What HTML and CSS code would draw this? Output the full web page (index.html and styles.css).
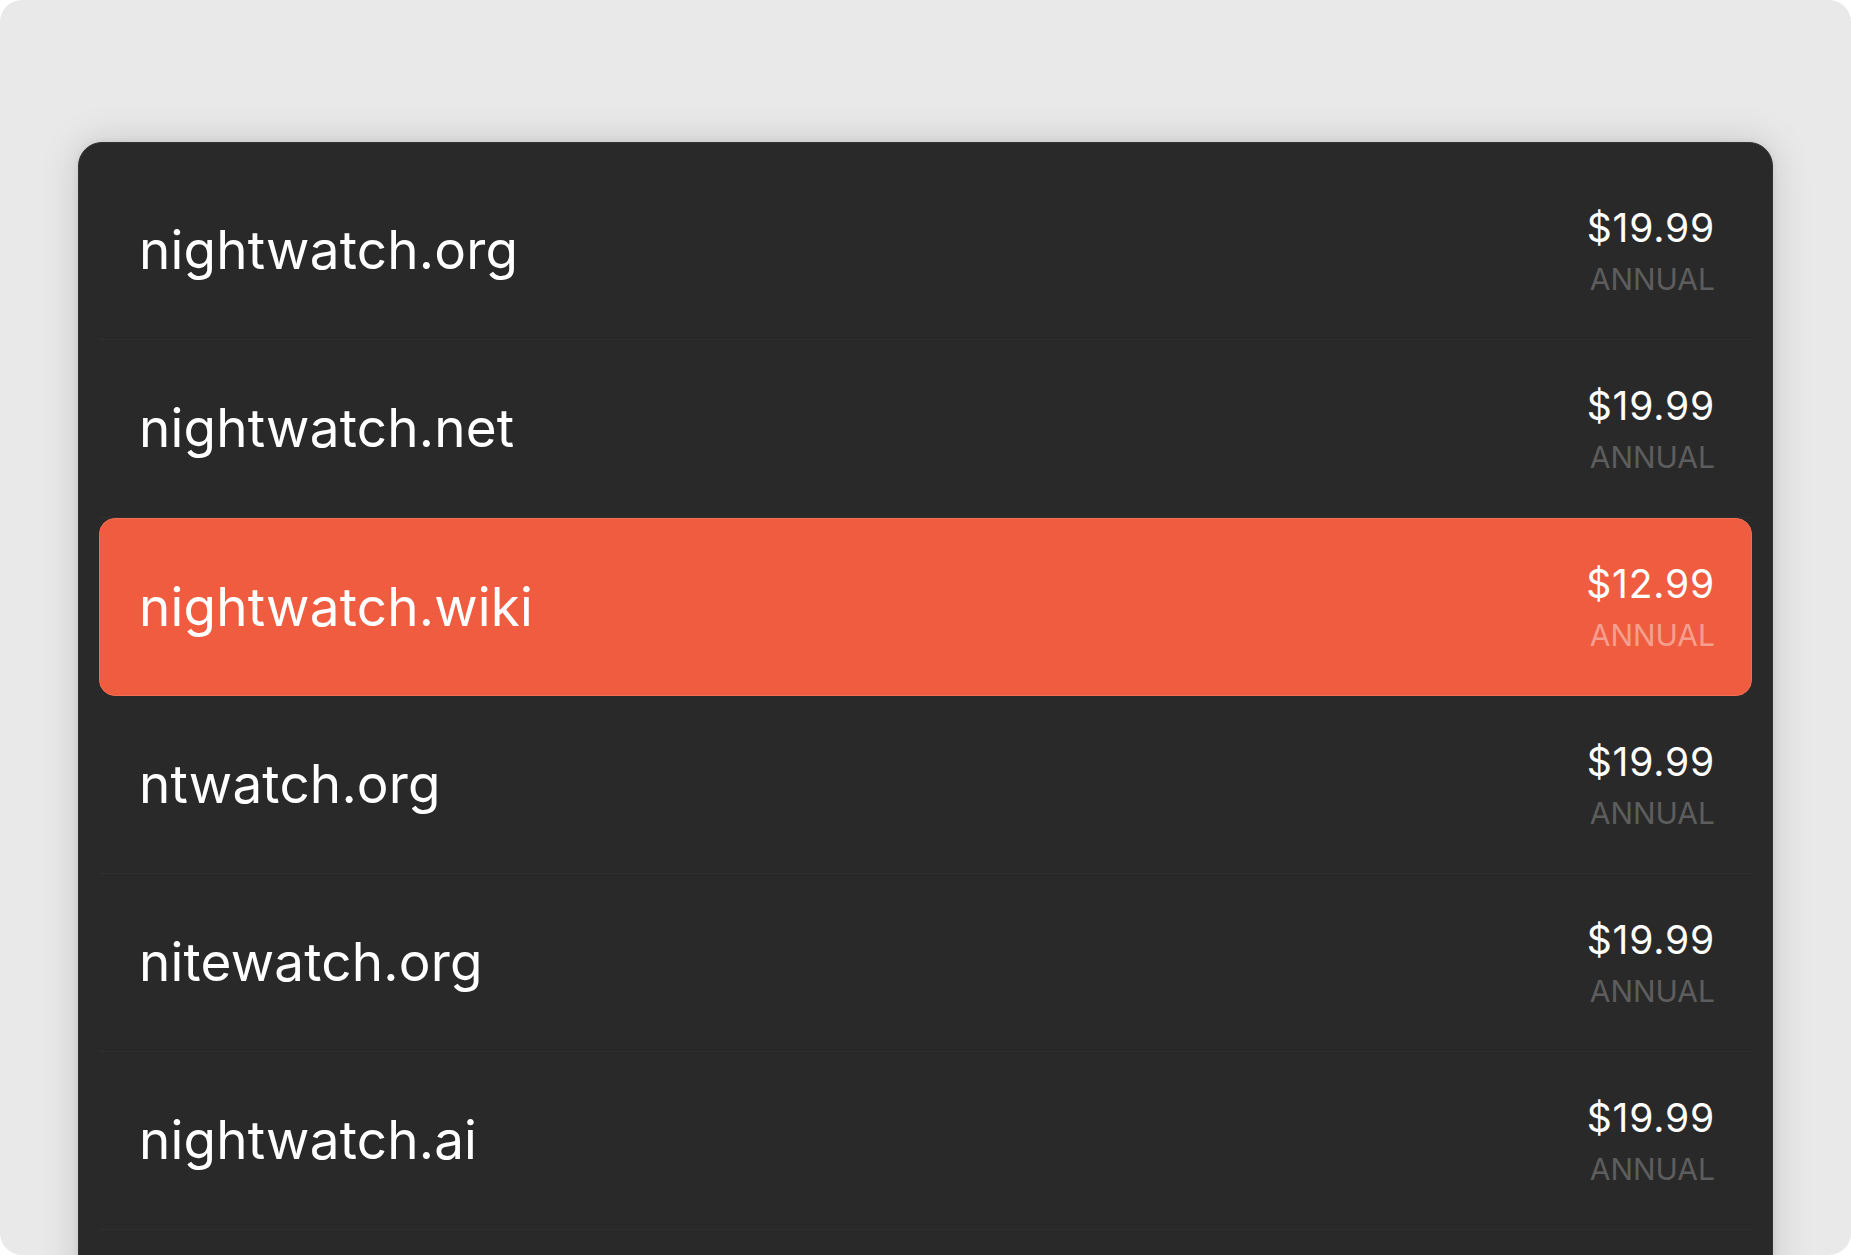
FILE: index.html
```html
<!DOCTYPE html>
<html lang="en">
<head>
<meta charset="utf-8">
<title>Domains</title>
<link rel="stylesheet" href="styles.css">
</head>
<body>
<div class="stage">
  <div class="card">
    <ul class="list">
      <li class="row">
        <span class="domain">nightwatch.org</span>
        <span class="price"><span class="amount">$19.99</span><span class="term">ANNUAL</span></span>
      </li>
      <li class="row">
        <span class="domain">nightwatch.net</span>
        <span class="price"><span class="amount">$19.99</span><span class="term">ANNUAL</span></span>
      </li>
      <li class="row row--active">
        <span class="domain">nightwatch.wiki</span>
        <span class="price"><span class="amount">$12.99</span><span class="term">ANNUAL</span></span>
      </li>
      <li class="row">
        <span class="domain">ntwatch.org</span>
        <span class="price"><span class="amount">$19.99</span><span class="term">ANNUAL</span></span>
      </li>
      <li class="row">
        <span class="domain">nitewatch.org</span>
        <span class="price"><span class="amount">$19.99</span><span class="term">ANNUAL</span></span>
      </li>
      <li class="row">
        <span class="domain">nightwatch.ai</span>
        <span class="price"><span class="amount">$19.99</span><span class="term">ANNUAL</span></span>
      </li>
    </ul>
  </div>
</div>
</body>
</html>
```

FILE: styles.css
```css
html, body {
  margin: 0;
  padding: 0;
  background: #ffffff;
}

body {
  font-family: Inter, "Noto Sans", "Liberation Sans", sans-serif;
  -webkit-font-smoothing: antialiased;
}

.stage {
  width: 1851px;
  height: 1255px;
  background: #e9e9e9;
  border-radius: 22px;
  overflow: hidden;
  box-sizing: border-box;
  padding: 142px 78px 0 78px;
}

.card {
  background: #292929;
  border: 1px solid #333333;
  border-radius: 24px;
  box-shadow: 0 0 40px rgba(0, 0, 0, 0.14), 0 0 8px rgba(0, 0, 0, 0.08);
  padding: 19px 20px 200px 20px;
  min-height: 1300px;
  box-sizing: border-box;
}

.list {
  list-style: none;
  margin: 0;
  padding: 0;
  display: flex;
  flex-direction: column;
}

.row {
  height: 178px;
  box-sizing: border-box;
  border-bottom: 1px solid #2f2f2f;
  display: flex;
  align-items: center;
  justify-content: space-between;
  padding: 0 38px 0 40px;
  color: #ffffff;
}

.row--active {
  background: #ef5c3f;
  border: 1px solid #f26e52;
  border-radius: 16px;
  padding: 0 37px 0 39px;
}

.domain {
  font-size: 53px;
  font-weight: 400;
  letter-spacing: 0.2px;
  line-height: 1;
}

.price {
  display: flex;
  flex-direction: column;
  align-items: flex-end;
  margin-top: 2px;
}

.amount {
  font-size: 39px;
  font-weight: 400;
  letter-spacing: 0.8px;
  line-height: 46px;
  margin-right: -1px;
}

.term {
  font-size: 30px;
  font-weight: 400;
  line-height: 40px;
  margin-top: 8px;
  color: #5d5d5d;
  margin-right: -1px;
}

.row--active .term {
  color: rgba(255, 255, 255, 0.42);
}
```
